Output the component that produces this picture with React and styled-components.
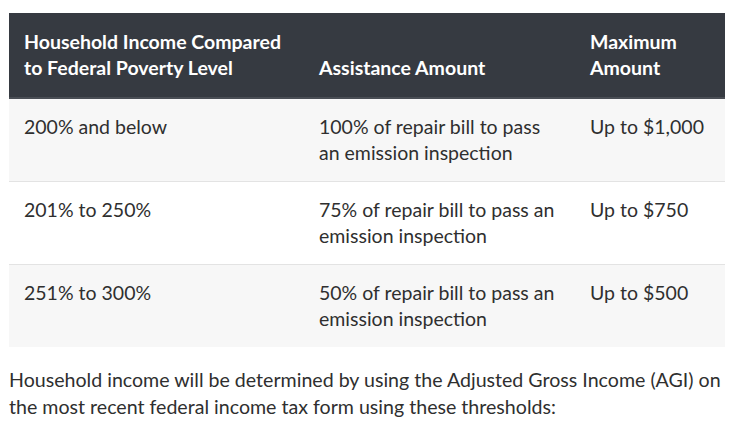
import React from 'react';
import styled, { createGlobalStyle } from 'styled-components';

const GlobalStyle = createGlobalStyle`
  body {
    margin: 0;
    background: #fff;
    font-family: Lato, "Open Sans", sans-serif;
    color: #2f2f2f;
  }
  * { box-sizing: border-box; }
`;

const Page = styled.div`
  width: 737px;
  padding: 13px 0 0 9px;
`;

const Table = styled.table`
  width: 716px;
  border-collapse: collapse;
  table-layout: fixed;
  font-size: 19.5px;
  line-height: 26px;
`;

const HeadCell = styled.th`
  width: ${(p) => p.w}px;
  background: #363a41;
  color: #fff;
  font-weight: 700;
  text-align: left;
  vertical-align: bottom;
  padding: 16px 15px 16px 15px;
  border-bottom: 2px solid #4a4e55;
`;

const Row = styled.tr`
  background: ${(p) => (p.shaded ? '#f7f7f7' : '#fff')};
  border-bottom: ${(p) => (p.last ? 'none' : '1px solid #e3e3e3')};
`;

const Cell = styled.td`
  vertical-align: top;
  padding: 15px 15px 15px 15px;
`;

const Note = styled.p`
  margin: 19px 0 0 0;
  width: 722px;
  font-size: 19.6px;
  line-height: 27px;
`;

const rows = [
  ['200% and below', '100% of repair bill to pass an emission inspection', 'Up to $1,000'],
  ['201% to 250%', '75% of repair bill to pass an emission inspection', 'Up to $750'],
  ['251% to 300%', '50% of repair bill to pass an emission inspection', 'Up to $500'],
];

export default function App() {
  return (
    <>
      <GlobalStyle />
      <Page>
        <Table>
          <thead>
            <tr>
              <HeadCell w={295}>Household Income Compared to Federal Poverty Level</HeadCell>
              <HeadCell w={271}>Assistance Amount</HeadCell>
              <HeadCell w={150}>Maximum Amount</HeadCell>
            </tr>
          </thead>
          <tbody>
            {rows.map((r, i) => (
              <Row key={i} shaded={i % 2 === 0} last={i === rows.length - 1}>
                <Cell>{r[0]}</Cell>
                <Cell>{r[1]}</Cell>
                <Cell>{r[2]}</Cell>
              </Row>
            ))}
          </tbody>
        </Table>
        <Note>
          Household income will be determined by using the Adjusted Gross Income (AGI) on the
          most recent federal income tax form using these thresholds:
        </Note>
      </Page>
    </>
  );
}
